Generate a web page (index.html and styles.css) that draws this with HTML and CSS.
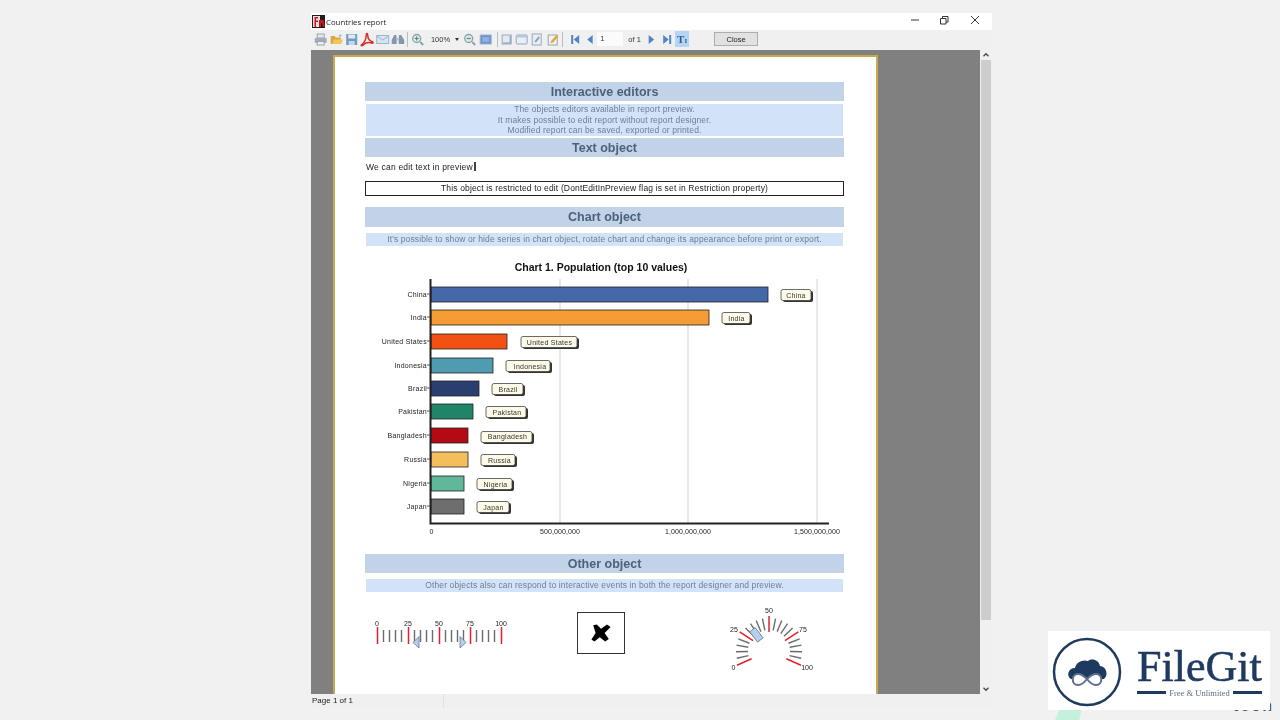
FILE: index.html
```html
<!DOCTYPE html>
<html lang="en">
<head>
<meta charset="utf-8">
<title>Countries report</title>
<link rel="stylesheet" href="styles.css">
</head>
<body>
<div class="window">
  <header class="titlebar">
    <svg class="appicon" viewBox="0 0 13 13"><rect width="13" height="13" fill="#2a1a1a"/><rect x="1" y="1" width="7" height="11" fill="#e8e0e0"/><path d="M2.5 2h3.5v1.5H4V5.500h2V7H4v5H2.500zM7 5h3.500q2 0 1.500 2.500l1 4.500h-2L10 8H9v4H7z" fill="#c4161c"/></svg>
    <span class="title">Countries report</span>
    <div class="winbtns">
      <svg class="winbtn" viewBox="0 0 30 14"><path d="M11 7h8" stroke="#333" fill="none"/></svg>
      <svg class="winbtn" viewBox="0 0 30 14"><path d="M11.500 5.500h5.500v5.500h-5.500zM13.500 5.500v-2h5.500v5.500h-2" stroke="#333" fill="none"/></svg>
      <svg class="winbtn" viewBox="0 0 30 14"><path d="M11 3l8 8M19 3l-8 8" stroke="#333" fill="none"/></svg>
    </div>
  </header>
  <nav class="toolbar">
    <svg class="tb" viewBox="0 0 15 15"><rect x="4" y="2" width="7" height="4" fill="#e4e8ec" stroke="#9aa4ae"/><rect x="1.500" y="6" width="12" height="5" rx="1" fill="#a3adb7"/><rect x="4" y="9.500" width="7" height="3.500" fill="#eef0f2" stroke="#9aa4ae"/></svg>
    <svg class="tb" viewBox="0 0 15 15"><path d="M1.500 4h4l1 1.500h5V12h-10z" fill="#dca63e"/><path d="M3 12l1.500-4.500H14L12 12z" fill="#f2c65c"/><path d="M9 4l3-2v3z" fill="#8fb4dc"/></svg>
    <svg class="tb" viewBox="0 0 15 15"><rect x="2" y="2" width="11" height="11" fill="#6f9bcb"/><rect x="4" y="2.500" width="7" height="4" fill="#dfe9f4"/><rect x="4.500" y="9" width="6" height="4" fill="#c5d6e8"/></svg>
    <svg class="tb" viewBox="0 0 15 15"><path d="M2 13c3-2 5-6 5-10 0-2 1.500-2 1.500 0 0 3 2 6 5 7 1 .5 0 1.500-1 1-3-1-6-.5-8 1.500-1 1.500-3 1.500-2.500.5z" fill="none" stroke="#d9302a" stroke-width="1.500"/></svg>
    <svg class="tb" viewBox="0 0 15 15"><rect x="1.500" y="3.500" width="12" height="8" fill="#d6e5f3" stroke="#9ab5d0"/><path d="M1.500 4l6 4 6-4" fill="none" stroke="#9ab5d0"/></svg>
    <svg class="tb" viewBox="0 0 15 15"><path d="M4 3h2l.5 3v6H1.500V8zM9 3h2l3 5v4H8.500V6z" fill="#8398ae"/><rect x="6" y="6" width="3" height="2.500" fill="#b4c2d0"/></svg>
    <span class="sep"></span>
    <svg class="tb" viewBox="0 0 15 15"><circle cx="6.500" cy="6.500" r="4" fill="#dce8ee" stroke="#8aa2ad" stroke-width="1.300"/><path d="M10 10l3 3" stroke="#8aa2ad" stroke-width="2"/><path d="M4.500 6.500h4M6.500 4.500v4" stroke="#4d8f5c" stroke-width="1.200"/></svg>
    <div class="combo"><span>100%</span><i class="caret"></i></div>
    <svg class="tb" viewBox="0 0 15 15"><circle cx="6.500" cy="6.500" r="4" fill="#dce8ee" stroke="#8aa2ad" stroke-width="1.300"/><path d="M10 10l3 3" stroke="#8aa2ad" stroke-width="2"/><path d="M4.500 6.500h4" stroke="#4d8f5c" stroke-width="1.200"/></svg>
    <svg class="tb" viewBox="0 0 15 15"><rect x="2" y="3" width="11" height="9" fill="#6a92ca" stroke="#9ab2ce"/><rect x="4" y="5" width="7" height="5" fill="#8fb0e0"/></svg>
    <span class="sep sep-wide"></span>
    <svg class="tb" viewBox="0 0 15 15"><rect x="3" y="3" width="9" height="9" fill="#e2eaf3" stroke="#98a9bc"/><path d="M11 4v7H4" fill="none" stroke="#7f98b6"/></svg>
    <svg class="tb" viewBox="0 0 15 15"><rect x="2" y="3" width="11" height="9" rx="1" fill="#e6eef6" stroke="#98a9bc"/><rect x="2" y="3" width="11" height="2.500" fill="#b3c8df"/></svg>
    <svg class="tb" viewBox="0 0 15 15"><rect x="3" y="2" width="9" height="11" fill="#e8eef4" stroke="#98a9bc"/><path d="M6 10l4-5" stroke="#8a9db1" stroke-width="2"/></svg>
    <svg class="tb" viewBox="0 0 15 15"><rect x="3" y="3" width="9" height="10" fill="#f2f2ee" stroke="#9aa4ae"/><path d="M5 11l1-2 5-6 2 1.500-5 6z" fill="#e0a93c"/></svg>
    <span class="sep sep-nav"></span>
    <svg class="tb" viewBox="0 0 15 15"><path d="M4 3h2v9H4zM12 3v9L6.500 7.500z" fill="#4f86c6"/></svg>
    <svg class="tb" viewBox="0 0 15 15"><path d="M10.500 3v9L5 7.500z" fill="#4f86c6"/></svg>
    <div class="pagebox">1</div>
    <span class="ofpages">of 1</span>
    <svg class="tb" viewBox="0 0 15 15"><path d="M4.500 3v9L10 7.500z" fill="#4f86c6"/></svg>
    <svg class="tb" viewBox="0 0 15 15"><path d="M11 3h-2v9h2zM3 3v9l5.500-4.500z" fill="#4f86c6"/></svg>
    <div class="tbactive"><span class="tbt">T</span><span class="tbi">I</span></div>
    <button class="closebtn">Close</button>
  </nav>
  <div class="viewer">
    <div class="scrollarea">
      <main class="page">
        <h2 class="band">Interactive editors</h2>
        <p class="note note-multi">The objects editors available in report preview.<br>It makes possible to edit report without report designer.<br>Modified report can be saved, exported or printed.</p>
        <h2 class="band band-text">Text object</h2>
        <p class="editable">We can edit text in preview <span class="cursor"></span></p>
        <p class="restricted">This object is restricted to edit (DontEditInPreview flag is set in Restriction property)</p>
        <h2 class="band band-chart">Chart object</h2>
        <p class="note note-single">It's possible to show or hide series in chart object, rotate chart and change its appearance before print or export.</p>
        <svg class="chart" viewBox="365 258 480 282">
          <text class="ct-title" x="601" y="271">Chart 1. Population (top 10 values)</text>
          <g class="grid">
            <path d="M560 279V523M688 279V523M817 279V523"/>
          </g>
          <g class="bars">
            <rect x="431" y="287" width="337" height="15" fill="#4468a8"/>
            <rect x="431" y="310" width="278" height="15" fill="#f59c34"/>
            <rect x="431" y="334" width="76" height="15" fill="#f55014"/>
            <rect x="431" y="358" width="62" height="15" fill="#4f9bb0"/>
            <rect x="431" y="381" width="48" height="15" fill="#2a3f70"/>
            <rect x="431" y="404" width="42" height="15" fill="#1f8468"/>
            <rect x="431" y="428" width="37" height="15" fill="#b40a14"/>
            <rect x="431" y="452" width="37" height="15" fill="#f4bf5b"/>
            <rect x="431" y="476" width="33" height="15" fill="#5fb89a"/>
            <rect x="431" y="499" width="33" height="15" fill="#6e6e6e"/>
          </g>
          <path class="axis" d="M430.500 279V523.500H829"/>
          <path class="ticks" d="M427 294h3M427 317h3M427 341h3M427 365h3M427 388h3M427 411h3M427 435h3M427 459h3M427 483h3M427 506h3"/>
          <g class="ylab">
            <text x="427" y="297">China</text><text x="427" y="320">India</text><text x="427" y="344">United States</text><text x="427" y="368">Indonesia</text><text x="427" y="391">Brazil</text><text x="427" y="414">Pakistan</text><text x="427" y="438">Bangladesh</text><text x="427" y="462">Russia</text><text x="427" y="486">Nigeria</text><text x="427" y="509">Japan</text>
          </g>
          <g class="tags">
            <rect class="tagsh" x="783" y="291" width="30" height="11" rx="2"/><rect class="tag" x="781" y="289.500" width="30" height="11" rx="2"/>
            <rect class="tagsh" x="724" y="314" width="28" height="11" rx="2"/><rect class="tag" x="722" y="312.500" width="28" height="11" rx="2"/>
            <rect class="tagsh" x="523" y="338" width="56" height="11" rx="2"/><rect class="tag" x="521" y="336.500" width="56" height="11" rx="2"/>
            <rect class="tagsh" x="508" y="362" width="44" height="11" rx="2"/><rect class="tag" x="506" y="360.500" width="44" height="11" rx="2"/>
            <rect class="tagsh" x="494" y="385" width="31" height="11" rx="2"/><rect class="tag" x="492" y="383.500" width="31" height="11" rx="2"/>
            <rect class="tagsh" x="488" y="408" width="40" height="11" rx="2"/><rect class="tag" x="486" y="406.500" width="40" height="11" rx="2"/>
            <rect class="tagsh" x="483" y="433" width="51" height="11" rx="2"/><rect class="tag" x="481" y="431.500" width="51" height="11" rx="2"/>
            <rect class="tagsh" x="483" y="456" width="34" height="11" rx="2"/><rect class="tag" x="481" y="454.500" width="34" height="11" rx="2"/>
            <rect class="tagsh" x="479" y="480" width="35" height="11" rx="2"/><rect class="tag" x="477" y="478.500" width="35" height="11" rx="2"/>
            <rect class="tagsh" x="479" y="503" width="32" height="11" rx="2"/><rect class="tag" x="477" y="501.500" width="32" height="11" rx="2"/>
          </g>
          <g class="taglab">
            <text x="796" y="298">China</text><text x="736.500" y="321">India</text><text x="549.500" y="345">United States</text><text x="530" y="369">Indonesia</text><text x="508" y="392">Brazil</text><text x="507" y="415">Pakistan</text><text x="507.500" y="439">Bangladesh</text><text x="499.500" y="463">Russia</text><text x="495.500" y="486.500">Nigeria</text><text x="493.500" y="510">Japan</text>
          </g>
          <g class="xlab">
            <text x="431.500" y="534">0</text><text x="560" y="534">500,000,000</text><text x="688" y="534">1,000,000,000</text><text x="817" y="534">1,500,000,000</text>
          </g>
        </svg>
        <h2 class="band band-other">Other object</h2>
        <p class="note note-single">Other objects also can respond to interactive events in both the report designer and preview.</p>
        <div class="gauges">
          <svg class="g-linear" viewBox="365 600 150 80">
            <g class="g-lab"><text x="377" y="626">0</text><text x="408" y="626">25</text><text x="439" y="626">50</text><text x="470" y="626">75</text><text x="501" y="626">100</text></g>
            <path class="g-grey" d="M383.500 630v12M389.500 630v12M395.500 630v12M401.500 630v12M414.500 630v12M420.500 630v12M426.500 630v12M432.500 630v12M445.500 630v12M451.500 630v12M457.500 630v12M463.500 630v12M476.500 630v12M482.500 630v12M488.500 630v12M494.500 630v12"/>
            <path class="g-red" d="M377.500 627v17M408.500 627v17M439.500 627v17M470.500 627v17M501.500 627v17"/>
            <path class="g-thumb" d="M413 642.500l6-6v11.500zM466 642.500l-6-6v11.500z"/>
          </svg>
          <div class="picture">
            <svg class="cross" viewBox="0 0 20 20"><path d="M3.500 3.500l3-.5 3.500 3.500 5-3.500 3 2-5 5 3.500 5-3 2-4.500-3.500-4.500 3.500-2.500-1.500 3.500-5.500z" fill="#000"/></svg>
          </div>
          <svg class="g-radial" viewBox="715 600 110 80">
            <g class="g-lab"><text x="733.500" y="670">0</text><text x="734" y="632">25</text><text x="769" y="612.500">50</text><text x="803" y="632">75</text><text x="807" y="670">100</text></g>
            <g class="g-spokes" transform="translate(769 651)">
              <g class="g-grey">
                <path transform="rotate(-102.600)" d="M0-33V-21"/><path transform="rotate(-91.200)" d="M0-33V-21"/><path transform="rotate(-79.800)" d="M0-33V-21"/><path transform="rotate(-68.400)" d="M0-33V-21"/>
                <path transform="rotate(-45.600)" d="M0-33V-21"/><path transform="rotate(-34.200)" d="M0-33V-21"/><path transform="rotate(-22.800)" d="M0-33V-21"/><path transform="rotate(-11.400)" d="M0-33V-21"/>
                <path transform="rotate(11.400)" d="M0-33V-21"/><path transform="rotate(22.800)" d="M0-33V-21"/><path transform="rotate(34.200)" d="M0-33V-21"/><path transform="rotate(45.600)" d="M0-33V-21"/>
                <path transform="rotate(68.400)" d="M0-33V-21"/><path transform="rotate(79.800)" d="M0-33V-21"/><path transform="rotate(91.200)" d="M0-33V-21"/><path transform="rotate(102.600)" d="M0-33V-21"/>
              </g>
              <g class="g-red">
                <path transform="rotate(-114)" d="M0-35V-19"/><path transform="rotate(-57)" d="M0-35V-19"/><path d="M0-35V-19"/><path transform="rotate(57)" d="M0-35V-19"/><path transform="rotate(114)" d="M0-35V-19"/>
              </g>
              <rect class="g-thumb" transform="rotate(-38)" x="-3.500" y="-27" width="7" height="13"/>
            </g>
          </svg>
        </div>
      </main>
    </div>
    <aside class="scrollbar">
      <svg class="arrow" viewBox="0 0 12 12"><path d="M3 7.500l3-3 3 3" fill="none" stroke="#444" stroke-width="1.500"/></svg>
      <div class="track"><div class="thumb"></div></div>
      <svg class="arrow" viewBox="0 0 12 12"><path d="M3 4.500l3 3 3-3" fill="none" stroke="#444" stroke-width="1.500"/></svg>
    </aside>
  </div>
  <footer class="status"><span class="status-cell">Page 1 of 1</span></footer>
</div>
<span class="behind-text">tech</span>
<div class="behind-shape"></div>
<div class="logo">
  <svg class="logo-mark" viewBox="0 0 70 70">
    <circle cx="35" cy="35" r="33" fill="#fff" stroke="#1f3a5f" stroke-width="2.500"/>
    <path d="M19 42c-5-3-3-11 4-11 1-6 8-9 13-7 4-3 11-1 12 5 6 0 9 9 4 13z" fill="#1f3a5f"/>
    <path d="M35 42c-3-3-6-5-9-5-7 0-7 11 0 11 3 0 6-2 9-6 3 4 6 6 9 6 7 0 7-11 0-11-3 0-6 2-9 5z" fill="#fff" stroke="#5d6f8e" stroke-width="2"/>
  </svg>
  <div class="logo-text">
    <div class="logo-name">FileGit</div>
    <div class="logo-tag"><i></i><span>Free &amp; Unlimited</span><i></i></div>
  </div>
</div>
</body>
</html>
```
FILE: styles.css
```css
* { box-sizing: border-box; }
html, body { margin: 0; padding: 0; }
body { width: 1280px; height: 720px; background: #f1f1f1; overflow: hidden; position: relative; font-family: "Liberation Sans", Arial, sans-serif; }
p, h2 { margin: 0; }

.window { position: absolute; left: 311px; top: 13px; width: 681px; height: 695px; display: flex; flex-direction: column; background: #f0f0f0; filter: blur(.3px); }
.titlebar { height: 17px; background: #fff; display: flex; align-items: center; padding-left: 1px; }
.appicon { width: 13px; height: 13px; }
.title { margin-left: 1px; font-size: 7.800px; color: #222; font-family: "Open Sans", sans-serif; }
.winbtns { margin-left: auto; display: flex; margin-right: 2px; }
.winbtn { width: 30px; height: 14px; display: block; margin-top: -3px; }
.winbtn:nth-child(2) { margin: -3px 1px 0 -1px; }

.toolbar { height: 20px; display: flex; align-items: center; padding: 0 0 2px 2.300px; background: #f0f0f0; flex: none; }
.tb { width: 15.400px; height: 15px; flex: none; display: block; }
.sep { width: 1px; height: 15px; background: #b9bec4; margin: 0 2px 0 1.500px; flex: none; }
.sep-wide { margin: 0 1px 0 3.500px; }
.sep-nav { margin: 0 3.500px 0 2px; }
.combo { width: 36.700px; display: flex; align-items: center; padding-left: 5.400px; font-size: 7.500px; color: #333; flex: none; }
.caret { width: 0; height: 0; border: 2.500px solid transparent; border-top: 3px solid #333; border-bottom: 0; margin-left: 5px; }
.pagebox { width: 26px; height: 14px; padding-left: 3px; background: #fbfbfb; font-size: 7.500px; line-height: 14px; color: #333; flex: none; }
.ofpages { width: 21px; font-size: 7.500px; color: #333; padding-left: 5px; flex: none; }
.tbactive { width: 14px; height: 16px; background: #b5d5f5; display: flex; justify-content: center; align-items: center; color: #2c5f96; font-family: "Liberation Serif", serif; font-weight: bold; flex: none; }
.tbt { font-size: 11px; line-height: 1; }
.tbi { font-size: 7px; line-height: 1; margin-top: 4px; }
.closebtn { width: 44px; height: 14px; margin-left: 25px; padding: 0; border: 1px solid #adadad; background: #e1e1e1; font: 7.500px "Liberation Sans", sans-serif; color: #222; }

.viewer { flex: 1; display: flex; min-height: 0; }
.scrollarea { flex: 1; background: #808080; overflow: hidden; padding: 5px 0 0 22px; }
.page { width: 545px; background: #fff; border: 2px solid #c9a94f; border-bottom: 0; padding: 25px 32px 0 30px; height: 760px; }

.band { height: 19px; background: #c2d3e7; color: #4b617c; font-size: 12.500px; line-height: 21px; text-align: center; font-weight: bold; }
.band-text { margin-top: 2px; }
.band-chart { height: 20px; margin-top: 11px; }
.band-other { margin-top: 14px; }
.note { margin: 0 1px; background: #d2e3f7; color: #6e7f93; font-size: 8.500px; text-align: center; letter-spacing: .12px; }
.note-multi { margin-top: 3px; height: 32px; line-height: 10.500px; }
.note-single { margin-top: 6px; height: 13px; line-height: 13px; }
.editable { height: 20px; padding: 5px 0 0 1px; font-size: 8.500px; line-height: 10px; color: #222; letter-spacing: .2px; }
.cursor { display: inline-block; width: 2px; height: 9px; background: #444; vertical-align: -1px; margin-left: -1px; }
.restricted { margin-top: 4px; height: 15px; border: 1px solid #222; font-size: 8.500px; line-height: 13px; text-align: center; color: #222; letter-spacing: .15px; }

.chart { display: block; width: 480px; height: 282px; margin-top: 12px; }
.chart text { font-family: "Liberation Sans", sans-serif; }
.ct-title { font-size: 10.500px; font-weight: bold; text-anchor: middle; fill: #111; }
.grid path { stroke: #e2e2e2; stroke-width: 1.500; fill: none; }
.bars rect { stroke: #222; stroke-width: .8; }
.axis { fill: none; stroke: #222; stroke-width: 2; }
.ticks { stroke: #555; fill: none; }
.ylab text { font-size: 7px; text-anchor: end; fill: #222; letter-spacing: .25px; }
.tagsh { fill: #333; }
.tag { fill: #fdfbe8; stroke: #444; stroke-width: .8; }
.taglab text { font-size: 7px; text-anchor: middle; fill: #333; letter-spacing: .25px; }
.xlab text { font-size: 7px; text-anchor: middle; fill: #222; letter-spacing: .1px; }

.gauges { display: flex; align-items: flex-start; margin-top: 8px; }
.g-linear { width: 150px; height: 80px; flex: none; }
.picture { width: 48px; height: 42px; margin: 12px 0 0 62px; border: 1px solid #333; background: #fff; display: flex; align-items: center; justify-content: center; flex: none; }
.cross { width: 24px; height: 24px; }
.g-radial { width: 110px; height: 80px; margin-left: 90px; flex: none; }
.g-lab text { font-family: "Liberation Sans", sans-serif; font-size: 7px; text-anchor: middle; fill: #222; }
.g-grey { stroke: #6c6c6c; stroke-width: 1.400; fill: none; }
.g-grey path { stroke: #6c6c6c; }
.g-red { stroke: #e2202a; stroke-width: 1.500; fill: none; }
.g-thumb { fill: #b5cfee; stroke: #5c6c80; stroke-width: .7; }

.scrollbar { width: 12px; display: flex; flex-direction: column; background: #f0f0f0; flex: none; }
.arrow { width: 12px; height: 10px; flex: none; display: block; }
.track { flex: 1; padding: 0 1px; }
.thumb { height: 560px; background: #cdcdcd; }

.status { height: 14px; background: #f0f0f0; font-size: 8px; color: #222; display: flex; align-items: center; padding-left: 1px; flex: none; }
.status-cell { width: 132px; border-right: 1px solid #e2e2e2; line-height: 14px; }

.behind-text { position: absolute; left: 1233px; top: 697px; font-size: 16px; font-weight: bold; letter-spacing: 2px; color: #555; }
.behind-shape { position: absolute; left: 1055px; top: 708px; width: 27px; height: 12px; background: #c6f0de; clip-path: polygon(18% 0, 100% 0, 90% 100%, 0 100%); }
.logo { position: absolute; left: 1048px; top: 631px; width: 222px; height: 79px; background: #fff; display: flex; align-items: center; padding-left: 4px; filter: blur(.3px); }
.logo-mark { width: 70px; height: 70px; flex: none; margin-top: 2px; }
.logo-text { margin-left: 15px; width: 125px; color: #1f3a5f; padding-top: 2px; }
.logo-name { font-family: "Liberation Serif", serif; font-size: 44px; line-height: 42px; -webkit-text-stroke: .6px #1f3a5f; white-space: nowrap; }
.logo-tag { display: flex; align-items: center; gap: 3px; font-family: "Liberation Serif", serif; font-size: 8.500px; color: #5f7084; white-space: nowrap; }
.logo-tag i { flex: 1; height: 2.500px; background: #1f3a5f; }
```
